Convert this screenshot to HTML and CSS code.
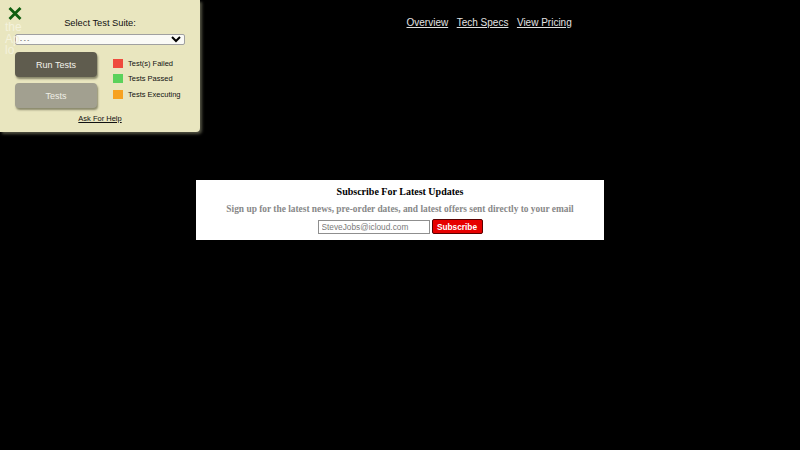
FILE: index.html
```html
<!DOCTYPE html>
<html>
<head>
<meta charset="utf-8">
<link rel="stylesheet" href="styles.css">
</head>
<body>
<div class="page">
  <nav class="nav">
    <a href="#">Overview</a>
    <a href="#">Tech Specs</a>
    <a href="#">View Pricing</a>
  </nav>
  <section class="subscribe">
    <h2 class="sub-title">Subscribe For Latest Updates</h2>
    <p class="sub-text">Sign up for the latest news, pre-order dates, and latest offers sent directly to your email</p>
    <form class="sub-form">
      <input class="sub-input" type="text" placeholder="SteveJobs@icloud.com">
      <button class="sub-btn" type="button">Subscribe</button>
    </form>
  </section>
</div>
<div class="panel">
  <div class="close">
    <svg width="14" height="13" viewBox="0 0 14 13"><path d="M1.5 1 L12.5 12 M12.5 1 L1.5 12" stroke="#0f5f10" stroke-width="2.8"/></svg>
  </div>
  <div class="panel-title">Select Test Suite:</div>
  <select class="suite"><option>- - -</option></select>
  <div class="panel-row">
    <div class="btns">
      <button class="btn btn-run">Run Tests</button>
      <button class="btn btn-tests">Tests</button>
    </div>
    <ul class="legend">
      <li><span class="sw red"></span>Test(s) Failed</li>
      <li><span class="sw green"></span>Tests Passed</li>
      <li><span class="sw orange"></span>Tests Executing</li>
    </ul>
  </div>
  <a class="help" href="#">Ask For Help</a>
</div>
<div class="behind">
  <div>the</div>
  <div>Ap</div>
  <div>lo</div>
</div>
</body>
</html>
```
FILE: styles.css
```css
html, body {
  margin: 0;
  padding: 0;
  background: #000;
  width: 800px;
  height: 450px;
  overflow: hidden;
  font-family: "Liberation Sans", Arial, sans-serif;
}
.page {
  width: 800px;
  height: 450px;
}
.behind {
  position: absolute;
  left: 5px;
  top: 22px;
  color: #f4f2dc;
  font-size: 12px;
  line-height: 11.5px;
  pointer-events: none;
}
.nav {
  display: flex;
  gap: 8.5px;
  padding: 17px 0 0 406.5px;
  height: 12px;
  line-height: 12px;
}
.nav a {
  color: #e2e2e2;
  font-size: 10px;
  text-decoration: underline;
}
.subscribe {
  margin: 151px 0 0 196px;
  width: 408px;
  height: 60px;
  background: #fff;
  box-sizing: border-box;
  padding-top: 6px;
  text-align: center;
  font-family: "Liberation Serif", "Times New Roman", serif;
}
.sub-title {
  margin: 0;
  font-size: 10px;
  font-weight: bold;
  color: #000;
  line-height: 12px;
}
.sub-text {
  margin: 5px 0 0;
  font-size: 9.4px;
  font-weight: bold;
  color: #888;
  line-height: 12px;
}
.sub-form {
  margin-top: 4px;
  display: flex;
  justify-content: center;
  align-items: center;
  gap: 2px;
}
.sub-input {
  width: 112px;
  height: 14px;
  box-sizing: border-box;
  border: 1px solid #8f8f8f;
  padding: 0 3px;
  font-family: "Liberation Sans", Arial, sans-serif;
  font-size: 8.3px;
  margin: 0;
  background: #fff;
}
.sub-input::placeholder { color: #7a7a7a; }
.sub-btn {
  width: 51px;
  height: 15px;
  box-sizing: border-box;
  border: 1px solid #5a0000;
  border-radius: 2px;
  background: #e60000;
  color: #fff;
  font-family: "Liberation Sans", Arial, sans-serif;
  font-size: 8.3px;
  font-weight: bold;
  padding: 0;
  margin: 0;
}
.panel {
  position: absolute;
  left: 0;
  top: 0;
  width: 200px;
  height: 132px;
  box-sizing: border-box;
  background: #e9e6bf;
  border-bottom-right-radius: 4px;
  box-shadow: 2px 2px 3px rgba(110, 110, 90, 0.75);
  padding: 17px 15px 0 15px;
}
.close {
  position: absolute;
  left: 8px;
  top: 7px;
  width: 14px;
  height: 13px;
  z-index: 2;
}
.close svg { display: block; }
.panel-title {
  text-align: center;
  font-size: 9.3px;
  color: #111;
  line-height: 12px;
}
.suite {
  display: block;
  width: 170px;
  height: 11px;
  margin-top: 5px;
  font-size: 6px;
  padding: 0;
  border: 1px solid #a0a0a0;
  border-radius: 2px;
  background: #fafaf6;
  font-family: "Liberation Sans", Arial, sans-serif;
}
.panel-row {
  display: flex;
  margin-top: 7px;
  gap: 16px;
}
.btns {
  display: flex;
  flex-direction: column;
  gap: 6px;
}
.btn {
  width: 82px;
  height: 25px;
  border: none;
  border-radius: 4px;
  font-family: "Liberation Sans", Arial, sans-serif;
  font-size: 9px;
  box-shadow: 1px 2px 2px rgba(60, 60, 40, 0.55);
  padding: 0;
}
.btn-run { background: #5f5c4e; color: #f4f4ec; }
.btn-tests { background: #a2a090; color: #efefe6; }
.legend {
  list-style: none;
  margin: 6px 0 0;
  padding: 0;
  display: flex;
  flex-direction: column;
  gap: 5.5px;
}
.legend li {
  display: flex;
  align-items: center;
  gap: 5px;
  font-size: 7.5px;
  color: #111;
  height: 10px;
}
.sw { width: 10px; height: 9px; display: inline-block; }
.red { background: #ef4b3d; }
.green { background: #5bd25b; }
.orange { background: #f7a21f; }
.help {
  display: block;
  text-align: center;
  margin-top: 6px;
  font-size: 7.5px;
  line-height: 10px;
  color: #111;
  text-decoration: underline;
}
```
